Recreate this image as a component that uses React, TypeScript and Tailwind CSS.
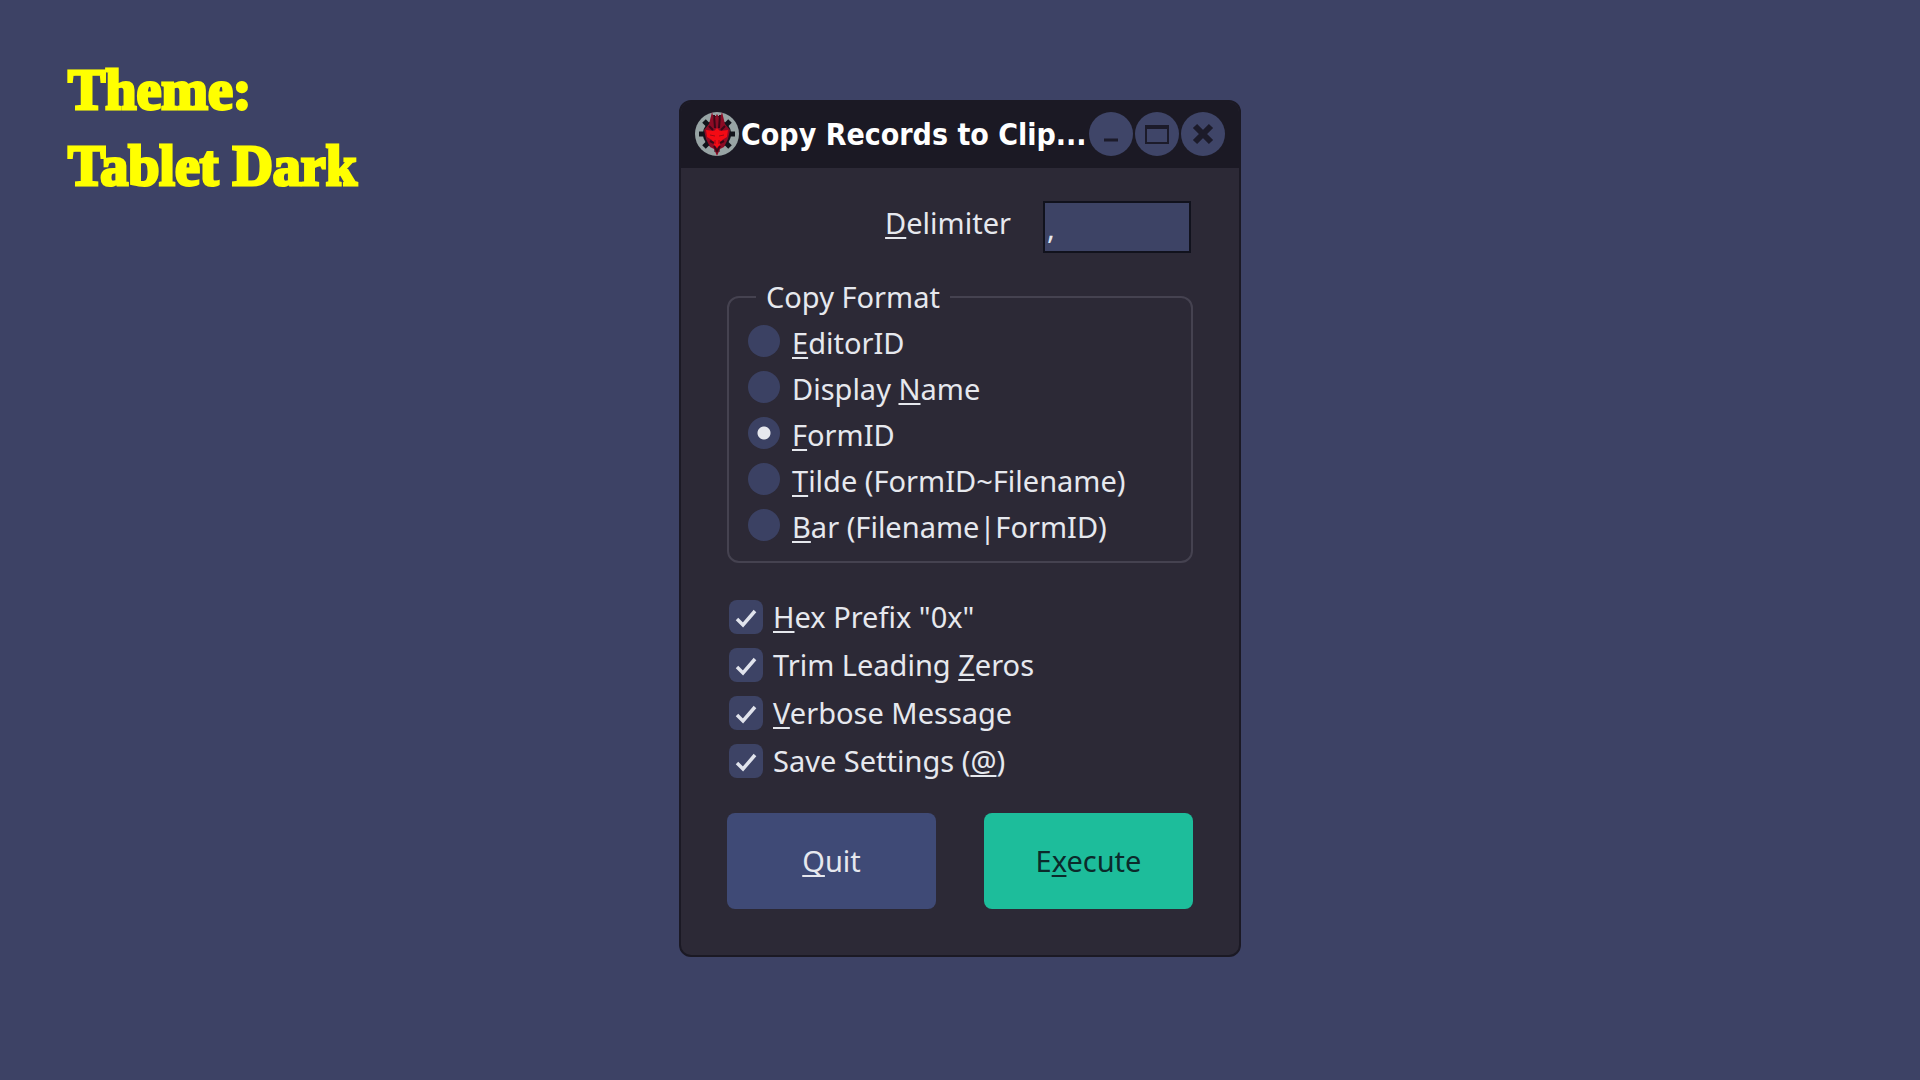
import React, { useState } from 'react'

const formats = [
  { value: 'editor', before: '', key: 'E', after: 'ditorID' },
  { value: 'display', before: 'Display ', key: 'N', after: 'ame' },
  { value: 'form', before: '', key: 'F', after: 'ormID' },
  { value: 'tilde', before: '', key: 'T', after: 'ilde (FormID~Filename)' },
  { value: 'bar', before: '', key: 'B', after: 'ar (Filename|FormID)' },
]

const options = [
  { name: 'hex', before: '', key: 'H', after: 'ex Prefix "0x"' },
  { name: 'trim', before: 'Trim Leading ', key: 'Z', after: 'eros' },
  { name: 'verbose', before: '', key: 'V', after: 'erbose Message' },
  { name: 'save', before: 'Save Settings (', key: '@', after: ')' },
]

type MnemonicProps = { before?: string; hotkey: string; after?: string }

function Mnemonic({ before = '', hotkey, after = '' }: MnemonicProps) {
  return (
    <span className="whitespace-pre">
      {before}
      <span className="underline decoration-2 underline-offset-3 [text-decoration-skip-ink:none]">{hotkey}</span>
      {after}
    </span>
  )
}

function AppLogo() {
  return (
    <svg viewBox="0 0 44 44" className="size-11 shrink-0" aria-hidden="true">
      <circle cx="22" cy="22" r="22" fill="#98a4a5" />
      <circle cx="22" cy="22" r="14" fill="#11131b" />
      <g stroke="#11131b" strokeWidth="5">
        <path d="M22 4v36M4 22h36M9 9l26 26M35 9L9 35" />
      </g>
      <path d="M17 0l2 7 3-5 3 5 2-7 3 12 5 6-2 9-4 8-4 2-3 7-3-7-4-2-4-8-2-9 5-6z" fill="#8d0b25" />
      <path d="M11 18l8 1 3-3 3 3 8-1-1 7-5 3-2 5-3 3-3-3-2-5-5-3z" fill="#f40a14" />
      <path d="M19 3l1 13M25 3l-1 13M14 14l4 4M30 14l-4 4" stroke="#3b0717" strokeWidth="2" />
      <path d="M15 29l4 2M29 29l-4 2M19 34l3 5 3-5" fill="none" stroke="#3b0717" strokeWidth="2" />
      <path d="M15 23l5 1M29 23l-5 1M20 28v4M24 28v4" stroke="#a00715" strokeWidth="1" />
    </svg>
  )
}

const captionButton = 'size-11 shrink-0 rounded-full bg-[#3f4568] text-[#1c1b2a] flex items-center justify-center'

function TitleBar() {
  return (
    <header className="flex h-[66px] items-center bg-[#1b1924] px-3.5 pb-0.5">
      <AppLogo />
      <h1 className="flex-1 whitespace-nowrap pl-0.5 pt-0.5 font-['DejaVu_Sans_Condensed','DejaVu_Sans',sans-serif] text-[30px] font-bold text-white">
        Copy Records to Clip...
      </h1>
      <div className="flex gap-0.5">
        <button type="button" aria-label="Minimize" className={captionButton}>
          <svg viewBox="0 0 44 44" className="size-11">
            <path d="M15 28h14" stroke="currentColor" strokeWidth="3" />
          </svg>
        </button>
        <button type="button" aria-label="Maximize" className={captionButton}>
          <svg viewBox="0 0 44 44" className="size-11">
            <path d="M11 15h22v16H11z" fill="none" stroke="currentColor" strokeWidth="2" />
            <path d="M10 15h24" stroke="currentColor" strokeWidth="4" />
          </svg>
        </button>
        <button type="button" aria-label="Close" className={captionButton}>
          <svg viewBox="0 0 44 44" className="size-11">
            <path d="M14 14l16 16M30 14L14 30" stroke="currentColor" strokeWidth="6" />
          </svg>
        </button>
      </div>
    </header>
  )
}

export default function App() {
  const [delimiter, setDelimiter] = useState(',')
  const [format, setFormat] = useState('form')
  const [checked, setChecked] = useState<Record<string, boolean>>({
    hex: true,
    trim: true,
    verbose: true,
    save: true,
  })

  return (
    <div className="grid min-h-screen grid-cols-[1fr_562px_1fr] items-start bg-[#3d4265]">
      <p className="pl-[68px] pt-[52px] font-['Liberation_Serif',serif] text-[56px] font-bold leading-[76px] text-[#ffff00] [-webkit-text-stroke:3px_#ffff00]">
        Theme:
        <br />
        Tablet Dark
      </p>

      <main className="mt-[100px] overflow-hidden rounded-xl border-2 border-[#1b1924] bg-[#2c2936] font-['Noto_Sans',sans-serif] text-[29px] leading-10 text-[#e6e8ee]">
        <TitleBar />

        <form className="px-[46px] pb-[46px] pt-[33px]" onSubmit={(e) => e.preventDefault()}>
          <div className="flex items-start justify-end gap-8 pr-0.5">
            <label htmlFor="delimiter" className="pt-0.5">
              <Mnemonic hotkey="D" after="elimiter" />
            </label>
            <input
              id="delimiter"
              type="text"
              value={delimiter}
              onChange={(e) => setDelimiter(e.target.value)}
              className="h-[52px] w-[148px] border-2 border-[#11121d] bg-[#3d4365] px-0.5 outline-none"
            />
          </div>

          <fieldset className="mt-6 rounded-xl border-2 border-[#454250] px-[19px] pb-3.5 pt-0.5">
            <legend className="ml-2 px-2.5">Copy Format</legend>
            {formats.map((f) => (
              <label key={f.value} className="flex h-[46px] items-start gap-3 pt-1.5 leading-9 last:h-11">
                <input
                  type="radio"
                  name="format"
                  value={f.value}
                  checked={format === f.value}
                  onChange={() => setFormat(f.value)}
                  className="size-8 shrink-0 appearance-none rounded-full bg-[#3b4163] checked:bg-[radial-gradient(circle,#e6e8ee_6px,#3b4163_7px)]"
                />
                <Mnemonic before={f.before} hotkey={f.key} after={f.after} />
              </label>
            ))}
          </fieldset>

          <div className="mt-[30px] pl-0.5">
            {options.map((o) => (
              <label key={o.name} className="flex h-12 items-center gap-2.5">
                <span className="grid size-[34px] shrink-0">
                  <input
                    type="checkbox"
                    name={o.name}
                    checked={checked[o.name]}
                    onChange={(e) => setChecked({ ...checked, [o.name]: e.target.checked })}
                    className="peer col-start-1 row-start-1 size-[34px] appearance-none rounded-lg bg-[#3d4365]"
                  />
                  <svg
                    viewBox="0 0 34 34"
                    className="pointer-events-none invisible col-start-1 row-start-1 peer-checked:visible"
                    aria-hidden="true"
                  >
                    <path d="M8 19l6 6L26 11" fill="none" stroke="#e0e3ec" strokeWidth="3.5" />
                  </svg>
                </span>
                <Mnemonic before={o.before} hotkey={o.key} after={o.after} />
              </label>
            ))}
          </div>

          <div className="mt-7 grid grid-cols-2 gap-12">
            <button type="button" className="h-24 rounded-lg bg-[#3f4a76]">
              <Mnemonic hotkey="Q" after="uit" />
            </button>
            <button type="submit" className="h-24 rounded-lg bg-[#1dbd9b] text-[#0b2a2b]">
              <Mnemonic before="E" hotkey="x" after="ecute" />
            </button>
          </div>
        </form>
      </main>
    </div>
  )
}
